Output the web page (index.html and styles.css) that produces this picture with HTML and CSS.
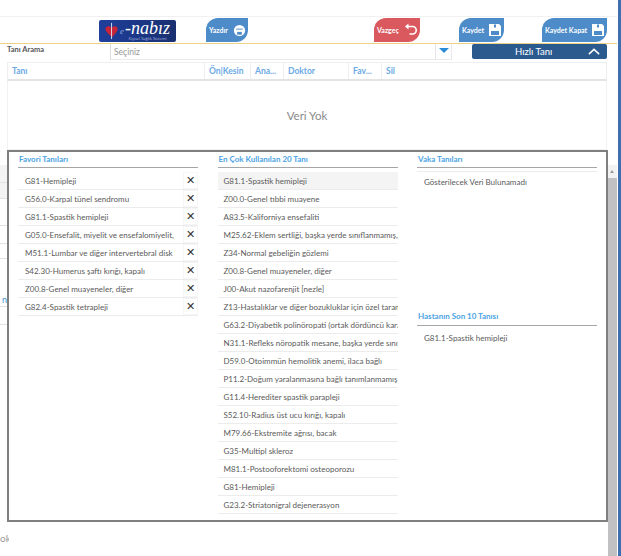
FILE: index.html
```html
<!DOCTYPE html>
<html lang="tr">
<head>
<meta charset="utf-8">
<title>Tanı</title>
<link rel="stylesheet" href="styles.css">
</head>
<body>
<div class="page">
  <div class="main">
    <div class="topstrip"></div>
    <div class="toolbar">
      <div class="logo">
        <svg class="logo-mark" viewBox="0 0 20 20" width="18" height="20" aria-hidden="true">
          <path d="M10 17 C4 12 2 9 3 6.500 C4 4 7.500 4 9.500 6.500 C11.500 4 15 4 16 6.500 C17 9 15 12 10 17Z" fill="#c7243a"/>
          <path d="M9.500 1V19" stroke="#dfe6f5" stroke-width="1"/>
        </svg>
        <span class="logo-e">e</span>
        <div class="logo-text"><span class="logo-name">-nabız</span><span class="logo-sub">Kişisel Sağlık Sistemi</span></div>
      </div>
      <button class="tb tb-print"><span>Yazdır</span>
        <svg viewBox="0 0 14 14" width="13" height="13" aria-hidden="true"><circle cx="7" cy="7" r="6" fill="#fff"/><path d="M3.500 5.500h7" stroke="#4d8bc9" stroke-width="1"/><rect x="4.500" y="8.500" width="5" height="3" fill="#4d8bc9"/></svg>
      </button>
      <button class="tb tb-cancel"><span>Vazgeç</span>
        <svg viewBox="0 0 14 14" width="14" height="14" aria-hidden="true"><path d="M3 3.500h5.500a3.700 3.700 0 0 1 0 7.500H5.500" fill="none" stroke="#fff" stroke-width="1.600"/><path d="M1 3.500l3.500-3v6Z" fill="#fff"/></svg>
      </button>
      <button class="tb tb-save"><span>Kaydet</span>
        <svg viewBox="0 0 14 14" width="14" height="14" aria-hidden="true"><path d="M1 1h10l2 2v10H1Z" fill="#fff"/><rect x="6" y="1.500" width="2" height="3" fill="#4d8bc9"/><rect x="3" y="8" width="8" height="4" fill="#4d8bc9"/></svg>
      </button>
      <button class="tb tb-saveclose"><span>Kaydet Kapat</span>
        <svg viewBox="0 0 14 14" width="14" height="14" aria-hidden="true"><path d="M1 1h10l2 2v10H1Z" fill="#fff"/><rect x="6" y="1.500" width="2" height="3" fill="#4d8bc9"/><rect x="3" y="8" width="8" height="4" fill="#4d8bc9"/></svg>
      </button>
    </div>
    <div class="searchrow">
      <label class="search-label">Tanı Arama</label>
      <div class="select">
        <span class="select-text">Seçiniz</span>
        <span class="select-arrow"><i></i></span>
      </div>
      <div class="quick">
        <span>Hızlı Tanı</span>
        <svg viewBox="0 0 14 8" width="12" height="7" aria-hidden="true"><path d="M1 7l6-5.500L13 7" fill="none" stroke="#fff" stroke-width="1.800"/></svg>
      </div>
    </div>
    <div class="grid">
      <div class="grid-head">
        <div class="gh c1">Tanı</div>
        <div class="gh c2">Ön|Kesin</div>
        <div class="gh c3">Ana...</div>
        <div class="gh c4">Doktor</div>
        <div class="gh c5">Fav...</div>
        <div class="gh c6">Sil</div>
      </div>
      <div class="grid-body">Veri Yok</div>
    </div>
    <div class="behind">
      <div class="b-row b-shade"></div>
      <div class="b-row b-shade b-short"></div>
      <div class="b-row b-tall"></div>
      <div class="b-row"></div>
      <div class="b-row b-mid"></div>
      <div class="b-row b-link">n</div>
      <div class="b-row"></div>
    </div>
    <div class="footer-text">ok</div>

    <div class="panel">
      <section class="col">
        <h3 class="col-title">Favori Tanıları</h3>
        <ul class="list list-fav">
          <li><span class="txt">G81-Hemipleji</span><span class="x">✕</span></li>
          <li><span class="txt">G56.0-Karpal tünel sendromu</span><span class="x">✕</span></li>
          <li><span class="txt">G81.1-Spastik hemipleji</span><span class="x">✕</span></li>
          <li><span class="txt">G05.0-Ensefalit, miyelit ve ensefalomiyelit, bakteriyel</span><span class="x">✕</span></li>
          <li><span class="txt">M51.1-Lumbar ve diğer intervertebral disk bozuklukları</span><span class="x">✕</span></li>
          <li><span class="txt">S42.30-Humerus şaftı kırığı, kapalı</span><span class="x">✕</span></li>
          <li><span class="txt">Z00.8-Genel muayeneler, diğer</span><span class="x">✕</span></li>
          <li><span class="txt">G82.4-Spastik tetrapleji</span><span class="x">✕</span></li>
        </ul>
      </section>
      <section class="col">
        <h3 class="col-title">En Çok Kullanılan 20 Tanı</h3>
        <ul class="list list-top">
          <li class="active"><span class="txt">G81.1-Spastik hemipleji</span></li>
          <li><span class="txt">Z00.0-Genel tıbbi muayene</span></li>
          <li><span class="txt">A83.5-Kaliforniya ensefaliti</span></li>
          <li><span class="txt">M25.62-Eklem sertliği, başka yerde sınıflanmamış, bacak</span></li>
          <li><span class="txt">Z34-Normal gebeliğin gözlemi</span></li>
          <li><span class="txt">Z00.8-Genel muayeneler, diğer</span></li>
          <li><span class="txt">J00-Akut nazofarenjit [nezle]</span></li>
          <li><span class="txt">Z13-Hastalıklar ve diğer bozukluklar için özel tarama</span></li>
          <li><span class="txt">G63.2-Diyabetik polinöropati (ortak dördüncü karakter)</span></li>
          <li><span class="txt">N31.1-Refleks nöropatik mesane, başka yerde sınıflanmamış</span></li>
          <li><span class="txt">D59.0-Otoimmün hemolitik anemi, ilaca bağlı</span></li>
          <li><span class="txt">P11.2-Doğum yaralanmasına bağlı tanımlanmamış beyin hasarı</span></li>
          <li><span class="txt">G11.4-Herediter spastik parapleji</span></li>
          <li><span class="txt">S52.10-Radius üst ucu kırığı, kapalı</span></li>
          <li><span class="txt">M79.66-Ekstremite ağrısı, bacak</span></li>
          <li><span class="txt">G35-Multipl skleroz</span></li>
          <li><span class="txt">M81.1-Postooforektomi osteoporozu</span></li>
          <li><span class="txt">G81-Hemipleji</span></li>
          <li><span class="txt">G23.2-Striatonigral dejenerasyon</span></li>
        </ul>
      </section>
      <section class="col col-side">
        <div class="side-block">
          <h3 class="col-title">Vaka Tanıları</h3>
          <div class="side-item side-item-first">Gösterilecek Veri Bulunamadı</div>
        </div>
        <div class="side-block side-last">
          <h3 class="col-title">Hastanın Son 10 Tanısı</h3>
          <div class="side-item">G81.1-Spastik hemipleji</div>
        </div>
      </section>
    </div>
    <div class="scrollbar"><div class="sb-arrow"></div><div class="sb-thumb"></div></div>
  </div>
  <div class="edge"></div>
</div>
</body>
</html>
```

FILE: styles.css
```css
* { box-sizing: border-box; }
html, body { margin: 0; padding: 0; background: #fff; overflow: hidden; }
body { font-family: Lato, "Open Sans", sans-serif; color: #555; }
.page { display: flex; width: 621px; height: 556px; overflow: hidden; }
.main { position: relative; width: 617px; height: 556px; flex: none; }
.edge { flex: 1; background: #3f6fb1; margin-left: 1px; }

.topstrip { height: 17px; border-bottom: 1px solid #f1f1f1; }
.toolbar { display: flex; align-items: flex-start; height: 27px; padding-top: 1px; border-bottom: 1px solid #ecd285; }

.logo { display: flex; align-items: center; width: 77px; height: 22px; margin: 2px 0 0 99px; padding-left: 4px; border-radius: 2px; background: linear-gradient(90deg, #1e3f9c, #1b3684 55%, #1a3070); color: #fff; overflow: hidden; }
.logo-mark { flex: none; }
.logo-e { font: italic 9px "Liberation Serif", serif; color: #8fa8dc; margin-left: -1px; }
.logo-text { display: flex; flex: none; flex-direction: column; align-items: center; margin-left: 1px; white-space: nowrap; }
.logo-name { font: italic 18px/15px "Liberation Serif", serif; }
.logo-sub { font: 4px/5px "Open Sans", sans-serif; color: #aebde0; }

.tb { display: flex; align-items: center; justify-content: space-between; height: 24px; padding: 0 2px 0 3px; border: 0; color: #fff; font: bold 7px Lato, sans-serif; white-space: nowrap; background: #4d8bc9; border-radius: 12px 0 12px 0; }
.tb-print { width: 42px; margin-left: 30px; }
.tb-cancel { width: 46px; margin-left: 126px; background: #d9595f; }
.tb-save { width: 45px; margin-left: 39px; }
.tb-saveclose { width: 65px; margin-left: 38px; }

.searchrow { display: flex; align-items: flex-start; height: 18px; }
.search-label { width: 103px; margin-left: 7px; font-size: 7.500px; font-weight: 700; line-height: 11px; color: #555; }
.select { display: flex; justify-content: space-between; width: 342px; height: 16px; border: 1px solid #eaeaea; border-top: 0; border-left-color: #ddd; }
.select-text { padding-left: 3px; font-size: 8.500px; line-height: 16px; color: #999; }
.select-arrow { display: flex; align-items: center; justify-content: center; width: 16px; border-left: 1px solid #e6e6e6; }
.select-arrow i { width: 0; height: 0; margin-bottom: 3px; border: 5px solid transparent; border-bottom: 0; border-top-color: #2a8bd8; }
.quick { display: flex; align-items: center; justify-content: space-between; width: 135px; height: 15px; margin-left: 20px; padding: 0 7px 0 43px; border-radius: 2px; background: #2b5a8f; color: #fff; font-size: 9.500px; }

.grid { width: 600px; margin-left: 7px; height: 88px; }
.grid-head { display: flex; height: 19px; border: 1px solid #eee; border-bottom: 2px solid #e4e4e4; }
.gh { padding-left: 4px; font-size: 8.500px; font-weight: 700; line-height: 16px; color: #6aa9e6; border-right: 1px solid #eee; white-space: nowrap; }
.c1 { width: 197px; }
.c2 { width: 46px; }
.c3 { width: 33px; }
.c4 { width: 65px; }
.c5 { width: 33px; }
.c6 { flex: 1; border-right: 0; }
.grid-body { height: 69px; border: 1px solid #f2f2f2; border-top: 0; text-align: center; font-size: 11.500px; line-height: 70px; color: #8a8a8a; }

.behind { width: 7px; padding-top: 15px; }
.b-row { height: 18px; border-bottom: 1px solid #e2e2e2; }
.b-shade { background: #f3f3f3; }
.b-short { height: 16px; }
.b-tall { height: 27px; }
.b-mid { height: 15px; }
.b-link { height: 48px; font-size: 9px; line-height: 82px; color: #3f8fd6; text-align: right; overflow: hidden; }
.footer-text { position: absolute; left: 0; top: 532px; font-size: 10px; line-height: 12px; color: #999; width: 9px; overflow: hidden; white-space: nowrap; }

.panel { position: absolute; left: 7px; top: 150px; width: 601px; height: 372px; display: grid; grid-template-columns: 180px 180px 180px; column-gap: 19.500px; padding: 3px 0 0 9px; background: #fff; border: 2px solid #7f7f7f; }
.col { min-width: 0; }
.col-title { margin: 0; height: 13px; border-bottom: 1px solid #a6a6a6; padding-left: 1px; font-size: 8px; font-weight: 700; line-height: 9px; color: #4ba3e3; }
.list { margin: 4px 0 0; padding: 0; list-style: none; }
.list li { display: flex; align-items: center; height: 18px; border-bottom: 1px solid #ececec; overflow: hidden; }
.txt { flex: 1; min-width: 0; padding: 1px 0 0 7px; overflow: hidden; white-space: nowrap; font-size: 8px; line-height: 17px; color: #5a5a5a; }
.list-top .txt { padding-left: 6px; }
.list li.active { background: #f4f4f4; }
.x { flex: none; width: 15px; height: 17px; margin-left: 8px; text-align: center; font-size: 11px; font-weight: 400; line-height: 14px; color: #333; border: 1px solid #f6f6f6; }

.col-side { display: flex; flex-direction: column; }
.side-block { height: 157px; }
.side-item { padding: 6px 0 0 7px; font-size: 8px; line-height: 12px; color: #5a5a5a; }
.side-item-first { margin-top: 3px; padding-top: 4px; border-top: 1px solid #ececec; }
.side-last .col-title { height: 14px; }

.scrollbar { position: absolute; left: 608px; top: 165px; width: 9px; height: 391px; background: #f2f2f2; }
.sb-arrow { height: 13px; position: relative; }
.sb-arrow::before { content: ""; position: absolute; left: 2px; top: 5px; border: 2.500px solid transparent; border-top: 0; border-bottom: 3px solid #9a9a9a; }
.sb-thumb { height: 378px; background: #c1c1c3; }
```
